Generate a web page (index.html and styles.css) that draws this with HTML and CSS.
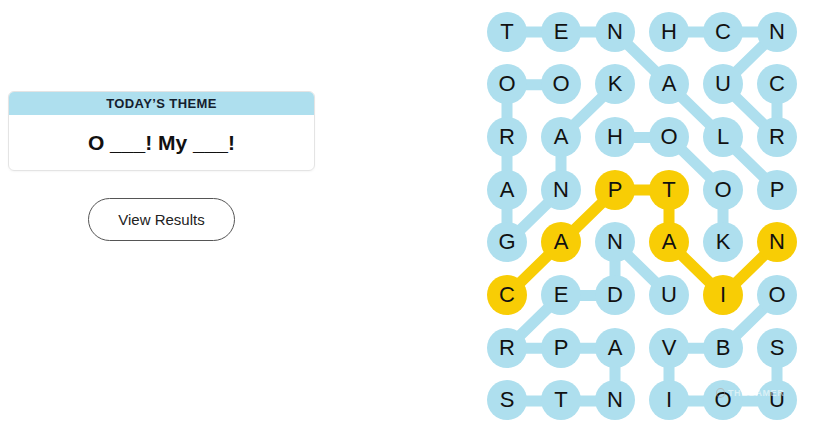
FILE: index.html
```html
<!DOCTYPE html>
<html lang="en">
    <head>
        <meta charset="UTF-8">
        <meta name="viewport" content="width=device-width, initial-scale=1.0">
        <title>Strands</title>
        <link rel="stylesheet" href="styles.css">
    </head>
    <body>
        <main class="page">
            <section class="side">
                <div class="theme-card">
                    <div class="theme-head">TODAY’S THEME</div>
                    <div class="theme-body">O ___! My ___!</div>
                </div>
                <button class="results-btn">View Results</button>
            </section>

            <div class="board">
                <!-- connectors sit under the letters -->
                <svg class="links" viewBox="0 0 310 409" width="310" height="409">
                    <g class="blue">
                        <line x1="20" y1="20" x2="74" y2="20"/>
                        <line x1="74" y1="20" x2="128" y2="20"/>
                        <line x1="182" y1="20" x2="236" y2="20"/>
                        <line x1="236" y1="20" x2="290" y2="20"/>
                        <line x1="128" y1="20" x2="182" y2="72.7"/>
                        <line x1="290" y1="20" x2="236" y2="72.7"/>
                        <line x1="20" y1="72.7" x2="74" y2="72.7"/>
                        <line x1="20" y1="72.7" x2="20" y2="125.4"/>
                        <line x1="182" y1="72.7" x2="236" y2="125.4"/>
                        <line x1="236" y1="72.7" x2="290" y2="125.4"/>
                        <line x1="290" y1="72.7" x2="290" y2="125.4"/>
                        <line x1="128" y1="72.7" x2="74" y2="125.4"/>
                        <line x1="20" y1="125.4" x2="20" y2="178.1"/>
                        <line x1="74" y1="125.4" x2="74" y2="178.1"/>
                        <line x1="128" y1="125.4" x2="182" y2="125.4"/>
                        <line x1="182" y1="125.4" x2="236" y2="178.1"/>
                        <line x1="236" y1="125.4" x2="290" y2="178.1"/>
                        <line x1="20" y1="178.1" x2="20" y2="230.8"/>
                        <line x1="74" y1="178.1" x2="20" y2="230.8"/>
                        <line x1="236" y1="178.1" x2="236" y2="230.8"/>
                        <line x1="128" y1="230.8" x2="128" y2="283.5"/>
                        <line x1="128" y1="230.8" x2="182" y2="283.5"/>
                        <line x1="74" y1="283.5" x2="128" y2="283.5"/>
                        <line x1="74" y1="283.5" x2="20" y2="336.2"/>
                        <line x1="290" y1="283.5" x2="236" y2="336.2"/>
                        <line x1="20" y1="336.2" x2="74" y2="336.2"/>
                        <line x1="74" y1="336.2" x2="128" y2="336.2"/>
                        <line x1="128" y1="336.2" x2="128" y2="388.9"/>
                        <line x1="182" y1="336.2" x2="236" y2="336.2"/>
                        <line x1="182" y1="336.2" x2="182" y2="388.9"/>
                        <line x1="290" y1="336.2" x2="290" y2="388.9"/>
                        <line x1="20" y1="388.9" x2="74" y2="388.9"/>
                        <line x1="74" y1="388.9" x2="128" y2="388.9"/>
                        <line x1="182" y1="388.9" x2="236" y2="388.9"/>
                        <line x1="236" y1="388.9" x2="290" y2="388.9"/>
                    </g>
                    <!-- spangram: CAPTAIN -->
                    <polyline class="yellow" points="20,283.5 74,230.8 128,178.1 182,178.1 182,230.8 236,283.5 290,230.8"/>
                </svg>

                <div class="grid">
                    <div class="cell">T</div><div class="cell">E</div><div class="cell">N</div><div class="cell">H</div><div class="cell">C</div><div class="cell">N</div>
                    <div class="cell">O</div><div class="cell">O</div><div class="cell">K</div><div class="cell">A</div><div class="cell">U</div><div class="cell">C</div>
                    <div class="cell">R</div><div class="cell">A</div><div class="cell">H</div><div class="cell">O</div><div class="cell">L</div><div class="cell">R</div>
                    <div class="cell">A</div><div class="cell">N</div><div class="cell found">P</div><div class="cell found">T</div><div class="cell">O</div><div class="cell">P</div>
                    <div class="cell">G</div><div class="cell found">A</div><div class="cell">N</div><div class="cell found">A</div><div class="cell">K</div><div class="cell found">N</div>
                    <div class="cell found">C</div><div class="cell">E</div><div class="cell">D</div><div class="cell">U</div><div class="cell found">I</div><div class="cell">O</div>
                    <div class="cell">R</div><div class="cell">P</div><div class="cell">A</div><div class="cell">V</div><div class="cell">B</div><div class="cell">S</div>
                    <div class="cell">S</div><div class="cell">T</div><div class="cell">N</div><div class="cell">I</div><div class="cell">O</div><div class="cell">U</div>
                </div>

                <div class="watermark"><span class="wm-dot"></span>THEGAMER</div>
            </div>
        </main>
    </body>
</html>
```

FILE: styles.css
```css
* {
    box-sizing: border-box;
}
body {
    margin: 0;
    background: #fff;
    font-family: "Liberation Sans", Arial, sans-serif;
    color: #121212;
}
.page {
    display: flex;
    align-items: flex-start;
}

/* left column */
.side {
    width: 307px;
    margin-left: 8px;
    padding-top: 91px;
    display: flex;
    flex-direction: column;
    align-items: center;
    gap: 27px;
}
.theme-card {
    width: 100%;
    border: 1px solid #e4e4e4;
    border-radius: 6px;
    overflow: hidden;
    box-shadow: 0 1px 2px rgba(0, 0, 0, 0.04);
}
.theme-head {
    height: 23px;
    line-height: 24px;
    background: #aedfee;
    text-align: center;
    font-size: 13px;
    font-weight: bold;
    letter-spacing: 0.4px;
    color: #14202e;
}
.theme-body {
    height: 55px;
    display: flex;
    align-items: center;
    justify-content: center;
    font-size: 21px;
    font-weight: bold;
    color: #111;
}
.results-btn {
    width: 147px;
    height: 43px;
    border: 1px solid #555;
    border-radius: 22px;
    background: #fff;
    font-family: "Liberation Sans", Arial, sans-serif;
    font-size: 15px;
    color: #222;
}

/* board */
.board {
    position: relative;
    margin-left: 172px;
    margin-top: 11.5px;
    width: 310px;
    height: 409px;
}
.links {
    position: absolute;
    left: 0;
    top: 0;
}
.links line,
.links polyline {
    stroke-width: 11;
    stroke-linecap: round;
    stroke-linejoin: round;
    fill: none;
}
.blue line {
    stroke: #aedfee;
}
.yellow {
    stroke: #f8cd05;
}
.grid {
    position: relative;
    display: grid;
    grid-template-columns: repeat(6, 40px);
    grid-auto-rows: 40px;
    column-gap: 14px;
    row-gap: 12.7px;
}
.cell {
    width: 40px;
    height: 40px;
    border-radius: 50%;
    background: #aedfee;
    display: flex;
    align-items: center;
    justify-content: center;
    font-size: 22px;
    color: #111;
}
.cell.found {
    background: #f8cd05;
}
.watermark {
    position: absolute;
    left: 229px;
    top: 376px;
    display: flex;
    align-items: center;
    gap: 3px;
    font-size: 9px;
    font-weight: bold;
    letter-spacing: 0.6px;
    color: rgba(255, 255, 255, 0.55);
}
.wm-dot {
    width: 9px;
    height: 10px;
    border-radius: 50%;
    border: 1px solid rgba(180, 150, 140, 0.5);
}
```
